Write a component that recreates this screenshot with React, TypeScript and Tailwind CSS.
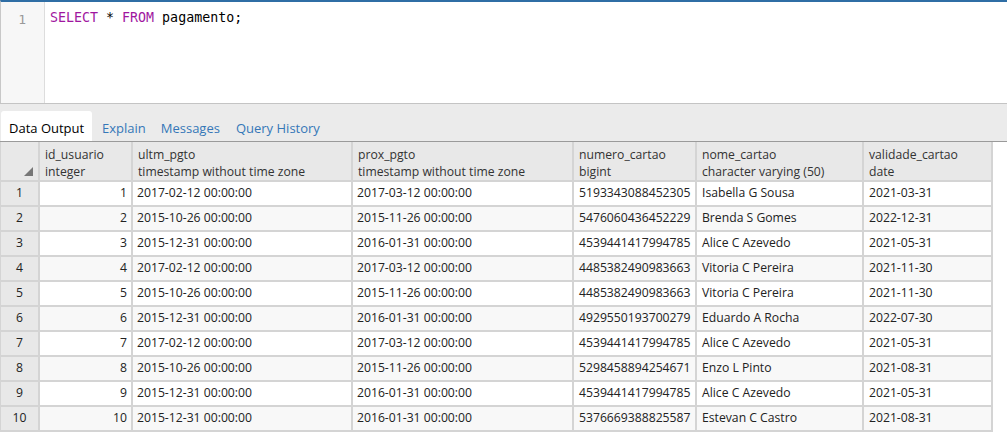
import React from 'react';

type Row = {
  id: number;
  ultm: string;
  prox: string;
  numero: string;
  nome: string;
  validade: string;
};

const rows: Row[] = [
  { id: 1, ultm: '2017-02-12 00:00:00', prox: '2017-03-12 00:00:00', numero: '5193343088452305', nome: 'Isabella G Sousa', validade: '2021-03-31' },
  { id: 2, ultm: '2015-10-26 00:00:00', prox: '2015-11-26 00:00:00', numero: '5476060436452229', nome: 'Brenda S Gomes', validade: '2022-12-31' },
  { id: 3, ultm: '2015-12-31 00:00:00', prox: '2016-01-31 00:00:00', numero: '4539441417994785', nome: 'Alice C Azevedo', validade: '2021-05-31' },
  { id: 4, ultm: '2017-02-12 00:00:00', prox: '2017-03-12 00:00:00', numero: '4485382490983663', nome: 'Vitoria C Pereira', validade: '2021-11-30' },
  { id: 5, ultm: '2015-10-26 00:00:00', prox: '2015-11-26 00:00:00', numero: '4485382490983663', nome: 'Vitoria C Pereira', validade: '2021-11-30' },
  { id: 6, ultm: '2015-12-31 00:00:00', prox: '2016-01-31 00:00:00', numero: '4929550193700279', nome: 'Eduardo A Rocha', validade: '2022-07-30' },
  { id: 7, ultm: '2017-02-12 00:00:00', prox: '2017-03-12 00:00:00', numero: '4539441417994785', nome: 'Alice C Azevedo', validade: '2021-05-31' },
  { id: 8, ultm: '2015-10-26 00:00:00', prox: '2015-11-26 00:00:00', numero: '5298458894254671', nome: 'Enzo L Pinto', validade: '2021-08-31' },
  { id: 9, ultm: '2015-12-31 00:00:00', prox: '2016-01-31 00:00:00', numero: '4539441417994785', nome: 'Alice C Azevedo', validade: '2021-05-31' },
  { id: 10, ultm: '2015-12-31 00:00:00', prox: '2016-01-31 00:00:00', numero: '5376669388825587', nome: 'Estevan C Castro', validade: '2021-08-31' },
];

const columns = [
  { name: 'id_usuario', type: 'integer', width: 'w-[93px]' },
  { name: 'ultm_pgto', type: 'timestamp without time zone', width: 'w-[220px]' },
  { name: 'prox_pgto', type: 'timestamp without time zone', width: 'w-[221px]' },
  { name: 'numero_cartao', type: 'bigint', width: 'w-[123px]' },
  { name: 'nome_cartao', type: 'character varying (50)', width: 'w-[167px]' },
  { name: 'validade_cartao', type: 'date', width: 'w-[129px]' },
];

export default function App() {
  return (
    <div className="w-[1007px] h-[442px] bg-white overflow-hidden font-['Open_Sans',sans-serif] text-[12.2px] text-[#222]">
      {/* Query editor */}
      <div className="h-[103px] border-t-2 border-l border-t-[#2f6ea5] border-l-[#c8c8c8] flex">
        <div className="w-[44px] bg-[#f7f7f7] border-r border-[#dddddd] pt-[8px] pr-[18px] text-right font-['DejaVu_Sans_Mono',monospace] text-[13px] text-[#999]">
          1
        </div>
        <div className="flex-1 pl-[5px] pt-[8px] font-['DejaVu_Sans_Mono',monospace] text-[13.3px] leading-[16px] text-black">
          <span className="text-[#a0169f]">SELECT</span> * <span className="text-[#a0169f]">FROM</span> pagamento;
        </div>
      </div>

      {/* Tabs */}
      <div className="h-[38px] bg-[#ebebeb] border-t border-[#c4c4c4] flex items-end pl-[1px] text-[13px]">
        <div className="h-[30px] w-[91px] bg-white rounded-t-[3px] flex items-center pt-[6px] pl-[8px] text-black">Data Output</div>
        <div className="h-[30px] flex items-center pt-[6px] pl-[10px] text-[#3577b8]">Explain</div>
        <div className="h-[30px] flex items-center pt-[6px] pl-[15px] text-[#3577b8]">Messages</div>
        <div className="h-[30px] flex items-center pt-[6px] pl-[16px] text-[#3577b8]">Query History</div>
      </div>

      {/* Grid */}
      <div className="border-t border-[#9a9a9a]">
        <div className="flex">
          <div className="w-[40px] h-[40px] bg-[#e8e8e8] border-l border-r-2 border-b-2 border-[#d4d4d4] relative">
            <svg className="absolute right-[5px] bottom-[4px]" width="9" height="9" viewBox="0 0 9 9">
              <polygon points="9,0 9,9 0,9" fill="#777" />
            </svg>
          </div>
          {columns.map((c) => (
            <div
              key={c.name}
              className={`${c.width} h-[40px] bg-[#e8e8e8] border-r-2 border-b-2 border-[#d4d4d4] pl-[5px] pt-[4px] leading-[17px] text-[#333]`}
            >
              <div>{c.name}</div>
              <div>{c.type}</div>
            </div>
          ))}
        </div>
        {rows.map((r, i) => {
          const bg = i % 2 === 0 ? 'bg-white' : 'bg-[#f8f8f8]';
          return (
            <div key={r.id} className="flex h-[25px]">
              <div className="w-[40px] bg-[#e8e8e8] border-l border-r-2 border-b-2 border-[#d4d4d4] flex items-center justify-center">
                {r.id}
              </div>
              <div className={`w-[93px] ${bg} border-r-2 border-b-2 border-[#d4d4d4] flex items-center justify-end pr-[4px]`}>{r.id}</div>
              <div className={`w-[220px] ${bg} border-r-2 border-b-2 border-[#d4d4d4] flex items-center pl-[4px]`}>{r.ultm}</div>
              <div className={`w-[221px] ${bg} border-r-2 border-b-2 border-[#d4d4d4] flex items-center pl-[4px]`}>{r.prox}</div>
              <div className={`w-[123px] ${bg} border-r-2 border-b-2 border-[#d4d4d4] flex items-center pl-[5px]`}>{r.numero}</div>
              <div className={`w-[167px] ${bg} border-r-2 border-b-2 border-[#d4d4d4] flex items-center pl-[5px]`}>{r.nome}</div>
              <div className={`w-[129px] ${bg} border-r-2 border-b-2 border-[#d4d4d4] flex items-center pl-[5px]`}>{r.validade}</div>
            </div>
          );
        })}
      </div>
    </div>
  );
}
